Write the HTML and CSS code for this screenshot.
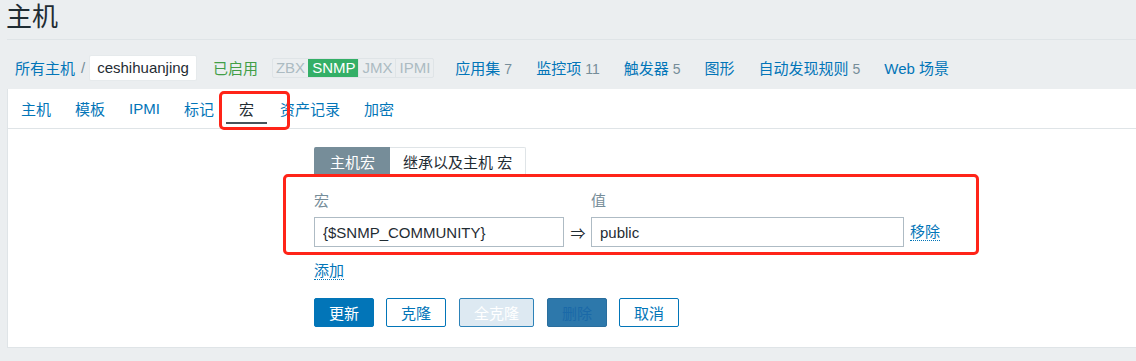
FILE: index.html
```html
<!DOCTYPE html>
<html lang="zh-CN">
<head>
    <meta charset="UTF-8">
    <meta name="viewport" content="width=device-width, initial-scale=1.0">
    <title>主机</title>
    <link rel="stylesheet" href="styles.css">
</head>
<body>
    <div id="page">
        <header class="page-header">
            <h1>主机</h1>
        </header>

        <nav class="host-nav">
            <a class="link" href="#">所有主机</a>
            <span class="sep">/</span>
            <span class="host-name">ceshihuanjing</span>
            <span class="status-on">已启用</span>
            <span class="avail">
                <span class="avail-item">ZBX</span>
                <span class="avail-item on">SNMP</span>
                <span class="avail-item">JMX</span>
                <span class="avail-item">IPMI</span>
            </span>
            <a class="link nav-link" href="#">应用集<sup>7</sup></a>
            <a class="link nav-link" href="#">监控项<sup>11</sup></a>
            <a class="link nav-link" href="#">触发器<sup>5</sup></a>
            <a class="link nav-link" href="#">图形</a>
            <a class="link nav-link" href="#">自动发现规则<sup>5</sup></a>
            <a class="link nav-link" href="#">Web 场景</a>
        </nav>

        <main class="panel">
            <ul class="tabs">
                <li><a href="#">主机</a></li>
                <li><a href="#">模板</a></li>
                <li><a href="#">IPMI</a></li>
                <li><a href="#">标记</a></li>
                <li class="active"><a href="#">宏</a></li>
                <li><a href="#">资产记录</a></li>
                <li><a href="#">加密</a></li>
            </ul>
            <div class="mark mark-tab"></div>

            <form class="macro-form">
                <div class="sub-tabs">
                    <span class="sub-tab selected">主机宏</span>
                    <span class="sub-tab">继承以及主机 宏</span>
                </div>

                <div class="macro-table">
                    <div class="macro-head">
                        <span class="col-macro">宏</span>
                        <span class="col-arrow"></span>
                        <span class="col-value">值</span>
                    </div>
                    <div class="macro-row">
                        <input class="input col-macro" type="text" value="{$SNMP_COMMUNITY}">
                        <span class="col-arrow">⇒</span>
                        <input class="input col-value" type="text" value="public">
                        <a class="dotted" href="#">移除</a>
                    </div>
                    <div class="mark mark-rows"></div>
                </div>

                <a class="dotted add-link" href="#">添加</a>

                <div class="buttons">
                    <button type="button" class="btn primary">更新</button>
                    <button type="button" class="btn alt">克隆</button>
                    <button type="button" class="btn faded">全克隆</button>
                    <button type="button" class="btn muted">删除</button>
                    <button type="button" class="btn alt">取消</button>
                </div>
            </form>
        </main>
    </div>
</body>
</html>
```

FILE: styles.css
```css
:root {
    --bg-color: #ebeef0;
    --border-color: #dfe4e7;
    --text-color: #1f2c33;
    --link-color: #0275b8;
    --grey-color: #768d99;
    --green-color: #429e47;
    --mark-color: #ff2418;
}

* {
    margin: 0;
    padding: 0;
    box-sizing: border-box;
}

body {
    font-family: 'Liberation Sans', 'Noto Sans CJK SC', sans-serif;
    font-size: 15px;
    color: var(--text-color);
    background-color: var(--bg-color);
    overflow: hidden;
}

#page {
    padding-left: 7px;
}

a {
    text-decoration: none;
}

.page-header {
    height: 40px;
    border-bottom: 1px solid var(--border-color);
}

.page-header h1 {
    font-size: 26px;
    font-weight: normal;
    line-height: 34px;
    margin-left: -1px;
}

/* host navigation */
.host-nav {
    display: flex;
    align-items: center;
    height: 49px;
    padding: 6px 0 0 8px;
}

.link {
    color: var(--link-color);
}

.sep {
    color: var(--grey-color);
    margin: 0 4px 0 6px;
}

.host-name {
    background-color: #fff;
    border: 1px solid #e6eaec;
    border-radius: 2px;
    height: 26px;
    line-height: 24px;
    padding: 0 7px;
}

.status-on {
    color: var(--green-color);
    margin-left: 16px;
}

.avail {
    display: flex;
    margin-left: 14px;
    margin-right: 9px;
    border: 1px solid var(--border-color);
    border-radius: 2px;
    height: 20px;
}

.avail-item {
    color: #acbbc2;
    padding: 0 3px;
    line-height: 18px;
    font-size: 15px;
    border-left: 1px solid var(--border-color);
}

.avail-item:first-child {
    border-left: none;
}

.avail-item.on {
    background-color: #34af67;
    color: #fff;
    border-left-color: #34af67;
}

.nav-link {
    margin-left: 12px;
    margin-right: 12px;
}

.nav-link sup {
    vertical-align: baseline;
    color: var(--grey-color);
    font-size: 14px;
    margin-left: 4px;
}

/* white panel */
.panel {
    position: relative;
    background-color: #fff;
    border-left: 1px solid var(--border-color);
    border-bottom: 1px solid var(--border-color);
    height: 259px;
}

.tabs {
    display: flex;
    list-style: none;
    height: 40px;
    border-bottom: 1px solid var(--border-color);
    padding-left: 1px;
}

.tabs li {
    display: flex;
    align-items: center;
    padding: 0 12px;
}

.tabs li a {
    color: var(--link-color);
}

.tabs li.active {
    padding: 0 13px;
    margin-right: 1px;
    position: relative;
}

.tabs li.active a {
    color: var(--text-color);
}

.tabs li.active::after {
    content: '';
    position: absolute;
    left: 0;
    right: 0;
    bottom: 4px;
    height: 2px;
    background-color: #46545c;
}

/* red annotation boxes */
.mark {
    position: absolute;
    border: 3px solid var(--mark-color);
    border-radius: 5px;
    pointer-events: none;
}

.mark-tab {
    left: 211px;
    top: 2px;
    width: 71px;
    height: 39px;
}

.mark-rows {
    left: -31px;
    top: 0;
    width: 696px;
    height: 81px;
}

/* macro form */
.macro-form {
    padding: 18px 0 0 306px;
}

.sub-tabs {
    display: flex;
    height: 27px;
}

.sub-tab {
    display: flex;
    align-items: center;
    padding: 0 13px;
    border: 1px solid var(--border-color);
    border-bottom: none;
    border-left: none;
    border-radius: 0 2px 0 0;
}

.sub-tab.selected {
    background-color: var(--grey-color);
    border-color: var(--grey-color);
    color: #fff;
    border-radius: 2px 0 0 0;
    padding: 0 14px 0 16px;
}

.macro-table {
    position: relative;
    padding-top: 15px;
}

.macro-head {
    display: flex;
    color: var(--grey-color);
    height: 28px;
}

.macro-row {
    display: flex;
    align-items: center;
    height: 30px;
}

.col-macro {
    width: 250px;
}

.col-arrow {
    width: 27px;
    text-align: center;
    padding-left: 1px;
}

.col-value {
    width: 313px;
}

.input {
    height: 30px;
    border: 1px solid #aebbc4;
    border-radius: 0;
    padding: 0 8px;
    font-family: inherit;
    font-size: 15px;
    color: var(--text-color);
    background-color: #fff;
}

.dotted {
    color: var(--link-color);
    border-bottom: 1px dotted var(--link-color);
    line-height: 17px;
}

.macro-row .dotted {
    margin-left: 6px;
}

.add-link {
    display: inline-block;
    margin-top: 15px;
}

.buttons {
    display: flex;
    gap: 12px;
    margin-top: 18px;
}

.btn {
    height: 29px;
    min-width: 60px;
    padding: 0 14px;
    font-family: inherit;
    font-size: 15px;
    border-radius: 2px;
    border: 1px solid var(--link-color);
    cursor: pointer;
}

.btn.primary {
    background-color: var(--link-color);
    color: #fff;
}

.btn.alt {
    background-color: #fff;
    color: var(--link-color);
}

.btn.faded {
    background-color: #dde9f2;
    border-color: #2d82b8;
    color: #fff;
    margin-left: 1px;
}

.btn.muted {
    background-color: #2d78ab;
    border-color: #2a6e9d;
    color: #1a69a8;
    margin-left: 1px;
}
```
